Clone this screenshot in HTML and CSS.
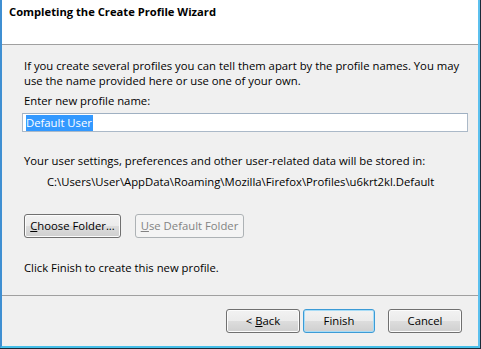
FILE: index.html
```html
<!DOCTYPE html>
<html>
<head>
<meta charset="utf-8">
<link rel="stylesheet" href="styles.css">
</head>
<body>
<div class="window">
  <div class="client">
    <div class="header">
      <div class="title">Completing the Create Profile Wizard</div>
    </div>
    <div class="content">
      <p class="intro">If you create several profiles you can tell them apart by the profile names. You may use the name provided here or use one of your own.</p>
      <div class="label">Enter new profile name:</div>
      <div class="input"><span class="sel">Default User</span></div>
      <div class="info">Your user settings, preferences and other user-related data will be stored in:</div>
      <div class="path">C:\Users\User\AppData\Roaming\Mozilla\Firefox\Profiles\u6krt2kl.Default</div>
      <div class="folder-buttons">
        <div class="btn choose"><span><u>C</u>hoose Folder...</span></div>
        <div class="btn disabled usedef"><span><u>U</u>se Default Folder</span></div>
      </div>
      <div class="finish-note">Click Finish to create this new profile.</div>
    </div>
    <div class="footer">
      <div class="btn back"><span>&lt; <u>B</u>ack</span></div>
      <div class="btn finish"><span>Finish</span></div>
      <div class="btn cancel"><span>Cancel</span></div>
    </div>
  </div>
</div>
</body>
</html>
```

FILE: styles.css
```css
html, body {
  margin: 0;
  padding: 0;
}
body {
  width: 481px;
  height: 349px;
  overflow: hidden;
  font-family: "Open Sans", "Noto Sans", "Liberation Sans", sans-serif;
  font-size: 11.3px;
  color: #000;
}
.window {
  width: 481px;
  height: 349px;
  box-sizing: border-box;
  border-right: 1px solid #1a2a38;
  border-bottom: 1px solid #1a2a38;
  background: #1a2a38;
}
.client {
  height: 348px;
  box-sizing: border-box;
  border-left: 2px solid #3f8fd2;
  border-right: 2px solid #5cc0ee;
  border-bottom: 2px solid #46bfe9;
  background: #f0f0f0;
  display: flex;
  flex-direction: column;
}
.header {
  background: #fff;
  border-bottom: 1px solid #a0a0a0;
  padding: 4px 0 0 7px;
  height: 40px;
}
.title {
  font-weight: bold;
  font-size: 11.2px;
  line-height: 15px;
}
.content {
  height: 250px;
  box-sizing: border-box;
  padding: 13px 10px 0 22px;
  line-height: 15px;
}
.intro {
  margin: 0;
}
.label {
  margin-top: 5px;
}
.input {
  margin: 5px 0 0 -2px;
  width: 446px;
  height: 19px;
  box-sizing: border-box;
  border: 1px solid #abb9c8;
  border-top-color: #9fb0c2;
  background: #fff;
  padding: 1px 0 0 3px;
  line-height: 15px;
}
.sel {
  display: inline-block;
  background: #3399ff;
  color: #fff;
  height: 16px;
  padding-right: 1px;
}
.info {
  margin-top: 21px;
}
.path {
  margin-top: 6px;
  padding-left: 23px;
}
.folder-buttons {
  margin-top: 25px;
  display: flex;
  gap: 14px;
}
.btn {
  height: 24px;
  box-sizing: border-box;
  border: 1px solid #707070;
  border-radius: 3px;
  background: linear-gradient(#f2f2f2 0%, #ebebeb 50%, #dddddd 50%, #cfcfcf 100%);
  box-shadow: inset 0 0 0 1px #fcfcfc;
  display: flex;
  align-items: center;
  justify-content: center;
  line-height: 15px;
  padding-bottom: 1px;
  white-space: nowrap;
}
.choose {
  width: 97px;
}
.usedef {
  width: 109px;
}
.btn.disabled {
  border-color: #adb2b5;
  background: #f4f4f4;
  box-shadow: none;
  color: #838383;
}
.finish-note {
  margin-top: 22px;
}
.footer {
  flex: 1;
  border-top: 1px solid #a0a0a0;
  display: flex;
  justify-content: flex-end;
  align-items: flex-start;
  padding: 13px 16px 0 0;
}
.back {
  width: 74px;
}
.finish {
  width: 72px;
  margin-left: 3px;
  border-color: #3c9bd6;
  box-shadow: inset 0 0 0 1px #a8dcf6;
}
.cancel {
  width: 74px;
  margin-left: 13px;
}
```
